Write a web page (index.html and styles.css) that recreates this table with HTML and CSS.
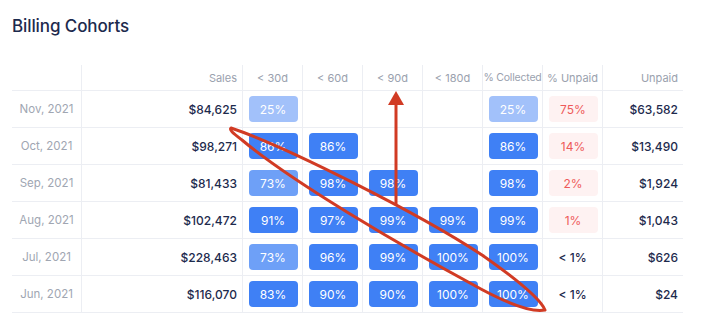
FILE: index.html
```html
<!DOCTYPE html>
<html>
<head>
<meta charset="utf-8">
<link rel="stylesheet" href="styles.css">
</head>
<body>
<div class="page">
  <h1 class="title">Billing Cohorts</h1>
  <div class="grid">
    <div class="th"></div>
    <div class="th right">Sales</div>
    <div class="th">&lt; 30d</div>
    <div class="th">&lt; 60d</div>
    <div class="th">&lt; 90d</div>
    <div class="th">&lt; 180d</div>
    <div class="th narrow">% Collected</div>
    <div class="th">% Unpaid</div>
    <div class="th right last">Unpaid</div>

    <div class="td date">Nov, 2021</div>
    <div class="td money">$84,625</div>
    <div class="td"><span class="badge b50">25%</span></div>
    <div class="td"></div>
    <div class="td"></div>
    <div class="td"></div>
    <div class="td"><span class="badge b50">25%</span></div>
    <div class="td"><span class="badge red">75%</span></div>
    <div class="td money last">$63,582</div>

    <div class="td date">Oct, 2021</div>
    <div class="td money">$98,271</div>
    <div class="td"><span class="badge">86%</span></div>
    <div class="td"><span class="badge">86%</span></div>
    <div class="td"></div>
    <div class="td"></div>
    <div class="td"><span class="badge">86%</span></div>
    <div class="td"><span class="badge red">14%</span></div>
    <div class="td money last">$13,490</div>

    <div class="td date">Sep, 2021</div>
    <div class="td money">$81,433</div>
    <div class="td"><span class="badge b75">73%</span></div>
    <div class="td"><span class="badge">98%</span></div>
    <div class="td"><span class="badge">98%</span></div>
    <div class="td"></div>
    <div class="td"><span class="badge">98%</span></div>
    <div class="td"><span class="badge red">2%</span></div>
    <div class="td money last">$1,924</div>

    <div class="td date">Aug, 2021</div>
    <div class="td money">$102,472</div>
    <div class="td"><span class="badge">91%</span></div>
    <div class="td"><span class="badge">97%</span></div>
    <div class="td"><span class="badge">99%</span></div>
    <div class="td"><span class="badge">99%</span></div>
    <div class="td"><span class="badge">99%</span></div>
    <div class="td"><span class="badge red">1%</span></div>
    <div class="td money last">$1,043</div>

    <div class="td date">Jul, 2021</div>
    <div class="td money">$228,463</div>
    <div class="td"><span class="badge b75">73%</span></div>
    <div class="td"><span class="badge">96%</span></div>
    <div class="td"><span class="badge">99%</span></div>
    <div class="td"><span class="badge">100%</span></div>
    <div class="td"><span class="badge">100%</span></div>
    <div class="td plain">&lt; 1%</div>
    <div class="td money last">$626</div>

    <div class="td date">Jun, 2021</div>
    <div class="td money">$116,070</div>
    <div class="td"><span class="badge">83%</span></div>
    <div class="td"><span class="badge">90%</span></div>
    <div class="td"><span class="badge">90%</span></div>
    <div class="td"><span class="badge">100%</span></div>
    <div class="td"><span class="badge">100%</span></div>
    <div class="td plain">&lt; 1%</div>
    <div class="td money last">$24</div>
  </div>
</div>
<svg class="annot" width="702" height="314" viewBox="0 0 702 314">
  <path d="M231,128 C285,146 420,214 482,255 C512,276 540,298 545,310 C530,313 500,300 470,283 C400,245 292,182 242,140 C233,133 229,130 231,128 Z" fill="none" stroke="#d13b24" stroke-width="3" stroke-linejoin="round"/>
  <line x1="396" y1="204" x2="396" y2="104" stroke="#d13b24" stroke-width="3"/>
  <polygon points="396,91 404,105 388,105" fill="#d13b24"/>
</svg>
</body>
</html>
```

FILE: styles.css
```css
* { box-sizing: border-box; }
html, body {
  margin: 0;
  padding: 0;
  background: #ffffff;
  font-family: Inter, "Noto Sans", sans-serif;
}
.page {
  padding: 14px 12px 0 12px;
  width: 702px;
  height: 314px;
  overflow: hidden;
}
.title {
  margin: 0;
  font-size: 17px;
  line-height: 24px;
  font-weight: 500;
  color: #1d2a4d;
  letter-spacing: -0.1px;
}
.grid {
  margin-top: 27px;
  display: grid;
  grid-template-columns: 70px 161px repeat(6, 60px) 80px;
}
.th {
  height: 26px;
  border-bottom: 1px solid #eceef3;
  border-right: 1px solid #eceef3;
  font-size: 11px;
  color: #9aa1ae;
  display: flex;
  align-items: center;
  justify-content: center;
  white-space: nowrap;
}
.th.narrow { font-size: 10.5px; letter-spacing: -0.2px; }
.td {
  height: 37px;
  border-bottom: 1px solid #eceef3;
  border-right: 1px solid #eceef3;
  display: flex;
  align-items: center;
  justify-content: center;
  font-size: 12px;
}
.right { justify-content: flex-end; padding-right: 5px; }
.last { border-right: none; }
.date { color: #a0a6b2; font-size: 11.5px; }
.money {
  justify-content: flex-end;
  padding-right: 5px;
  color: #1d2a4d;
  font-weight: 500;
}
.plain { color: #1d2a4d; font-weight: 500; }
.badge {
  width: 49px;
  height: 26px;
  border-radius: 4px;
  background: #3f80f5;
  color: #ffffff;
  font-weight: 400;
  display: flex;
  align-items: center;
  justify-content: center;
  margin-left: 1px;
}
.badge.b50 { background: #a2c1fa; }
.badge.b75 { background: #6ea0f7; }
.badge.red { background: #fef2f2; color: #ee5a5a; }
.annot {
  position: absolute;
  left: 0;
  top: 0;
  pointer-events: none;
}
```
